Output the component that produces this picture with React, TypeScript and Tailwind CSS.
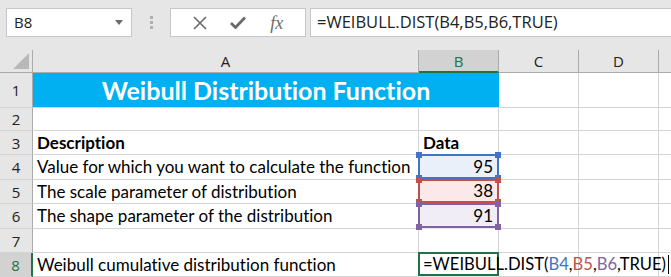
import React from 'react';

const ROWS: { n: number; h: string }[] = [
  { n: 1, h: 'h-[35px]' },
  { n: 2, h: 'h-[23px]' },
  { n: 3, h: 'h-[24px]' },
  { n: 4, h: 'h-[25px]' },
  { n: 5, h: 'h-[24px]' },
  { n: 6, h: 'h-[25px]' },
  { n: 7, h: 'h-[24px]' },
  { n: 8, h: 'h-[24px]' },
];

const cell = 'border-r border-b border-[#d4d4d4] bg-white';

function Handle({ pos, color }: { pos: string; color: string }) {
  return <span className={`absolute w-[6px] h-[6px] ${pos} ${color} z-10`} />;
}

function DataCell({ value, h, bg, border, handle }: { value: string; h: string; bg: string; border: string; handle: string }) {
  return (
    <div className={`${h} relative ${bg} border-2 ${border} -mt-px -ml-px w-[81px] flex items-center justify-end pr-[4px] text-black`}>
      {value}
      <Handle pos="-left-[4px] -top-[4px]" color={handle} />
      <Handle pos="-right-[4px] -top-[4px]" color={handle} />
      <Handle pos="-left-[4px] -bottom-[4px]" color={handle} />
      <Handle pos="-right-[4px] -bottom-[4px]" color={handle} />
    </div>
  );
}

export default function App() {
  const font = "font-['Lato','Open_Sans',sans-serif] [font-variant-ligatures:none]";
  return (
    <div className={`w-[671px] h-[277px] overflow-hidden bg-[#e6e6e6] ${font}`}>
      {/* Formula bar */}
      <div className="h-[50px] flex items-start pt-[8px] pl-[6px]">
        <div className="w-[126px] h-[29px] bg-white border border-[#c6c6c6] flex items-center justify-between pl-[7px] pr-[8px] font-['Open_Sans',sans-serif] text-[15px] text-[#222]">
          B8
          <svg width="8" height="5" viewBox="0 0 8 5"><path d="M0 0h8L4 5z" fill="#6b6b6b" /></svg>
        </div>
        <div className="w-[38px] h-[29px] flex flex-col items-center justify-center gap-[2px]">
          <span className="w-[3px] h-[3px] bg-[#b0b0b0]" />
          <span className="w-[3px] h-[3px] bg-[#b0b0b0]" />
          <span className="w-[3px] h-[3px] bg-[#b0b0b0]" />
        </div>
        <div className="w-[136px] h-[29px] bg-white border border-[#c6c6c6] flex items-center justify-around px-[10px]">
          <svg width="14" height="14" viewBox="0 0 14 14"><path d="M1 1l12 12M13 1L1 13" stroke="#6a6a6a" strokeWidth="1.6" /></svg>
          <svg width="16" height="13" viewBox="0 0 16 13"><path d="M1 7l4.5 4.5L15 1.5" stroke="#6a6a6a" strokeWidth="2.8" fill="none" /></svg>
          <span className="font-['Liberation_Serif',serif] italic text-[18px] text-[#6a6a6a] leading-none">fx</span>
        </div>
        <div className="ml-[4px] flex-1 h-[29px] bg-white border border-[#c6c6c6] border-r-0 flex items-center pl-[6px] font-['Open_Sans',sans-serif] text-[16.5px] text-[#222]">
          =WEIBULL.DIST(B4,B5,B6,TRUE)
        </div>
      </div>

      {/* Sheet */}
      <div className="grid grid-cols-[33px_386px_80px_80px_80px_1fr] text-[17px] leading-[22px] text-black">
        {/* column headers */}
        <div className="h-[23px] border-r border-b border-[#ababab] flex items-end justify-end p-[3px]">
          <svg width="16" height="16" viewBox="0 0 16 16"><path d="M16 0V16H0z" fill="#b9b9b9" /></svg>
        </div>
        <div className="h-[23px] border-r border-b border-[#ababab] flex items-center justify-center font-['Open_Sans',sans-serif] text-[15px] text-[#222]">A</div>
        <div className="h-[23px] bg-[#d2d2d2] border-r border-[#ababab] border-b-2 border-b-[#217346] flex items-center justify-center font-['Open_Sans',sans-serif] text-[15px] text-[#217346]">B</div>
        <div className="h-[23px] border-r border-b border-[#ababab] flex items-center justify-center font-['Open_Sans',sans-serif] text-[15px] text-[#222]">C</div>
        <div className="h-[23px] border-r border-b border-[#ababab] flex items-center justify-center font-['Open_Sans',sans-serif] text-[15px] text-[#222]">D</div>
        <div className="h-[23px] border-b border-[#ababab]" />

        {ROWS.map(({ n, h }) => (
          <React.Fragment key={n}>
            <div
              className={`${h} flex items-center justify-center font-['Open_Sans',sans-serif] text-[15px] border-b border-[#d4d4d4] ${
                n === 8 ? 'bg-[#d2d2d2] text-[#217346] border-r-2 border-r-[#217346]' : 'text-[#222] border-r border-r-[#ababab]'
              }`}
            >
              {n}
            </div>
            {n === 1 && (
              <>
                <div className={`${h} col-span-2 bg-[#00b0f0] border-b border-[#d4d4d4] flex items-center justify-center text-white font-bold text-[25px]`}>
                  Weibull Distribution Function
                </div>
                <div className={`${h} ${cell}`} />
                <div className={`${h} ${cell}`} />
                <div className={`${h} border-b border-[#d4d4d4] bg-white`} />
              </>
            )}
            {n !== 1 && (
              <>
                <div className={`${h} ${cell} flex items-center pl-[4px] ${n === 3 ? 'font-bold' : ''}`}>
                  {n === 3 && 'Description'}
                  {n === 4 && 'Value for which you want to calculate the function'}
                  {n === 5 && 'The scale parameter of distribution'}
                  {n === 6 && 'The shape parameter of the distribution'}
                  {n === 8 && 'Weibull cumulative distribution function'}
                </div>
                {n === 4 ? (
                  <DataCell h={h} value="95" bg="bg-[#e9f0fa]" border="border-[#4472c4]" handle="bg-[#4472c4]" />
                ) : n === 5 ? (
                  <DataCell h={h} value="38" bg="bg-[#fbe9e9]" border="border-[#c0504d]" handle="bg-[#c0504d]" />
                ) : n === 6 ? (
                  <DataCell h={h} value="91" bg="bg-[#f1edf6]" border="border-[#8064a2]" handle="bg-[#8064a2]" />
                ) : n === 8 ? (
                  <div className={`${h} relative bg-white border-2 border-[#217346] -mt-px -ml-px w-[81px]`}>
                    <div className="absolute left-[3px] top-0 h-full flex items-center whitespace-nowrap z-10 text-[16.6px]">
                      =WEIBULL.DIST(<span className="text-[#4472c4]">B4</span>,<span className="text-[#c0504d]">B5</span>,<span className="text-[#8064a2]">B6</span>,TRUE)
                      <span className="ml-[2px] w-px h-[19px] bg-black" />
                    </div>
                  </div>
                ) : (
                  <div className={`${h} ${cell} flex items-center pl-[4px] ${n === 3 ? 'font-bold' : ''}`}>
                    {n === 3 && 'Data'}
                  </div>
                )}
                <div className={`${h} ${cell}`} />
                <div className={`${h} ${cell}`} />
                <div className={`${h} border-b border-[#d4d4d4] bg-white`} />
              </>
            )}
          </React.Fragment>
        ))}
      </div>
    </div>
  );
}
